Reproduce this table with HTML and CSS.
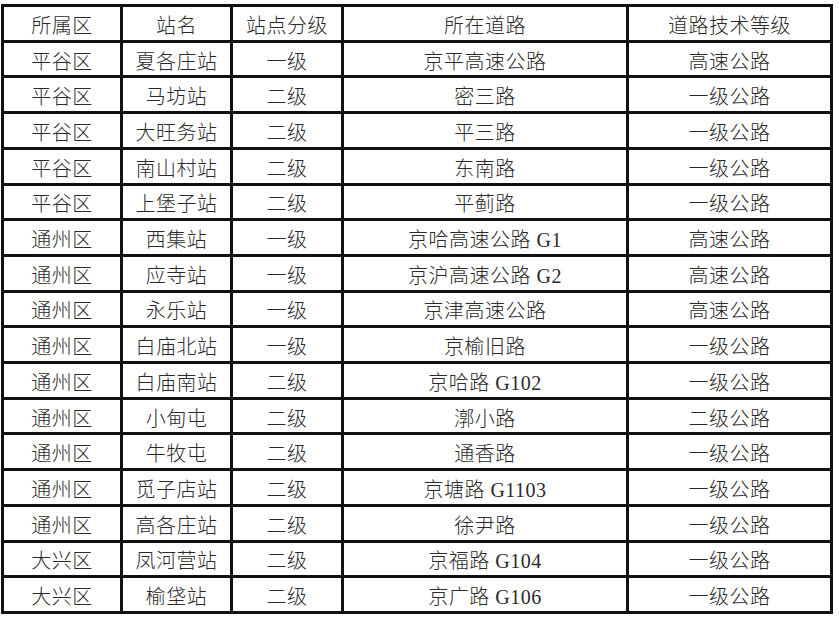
FILE: index.html
```html
<!DOCTYPE html>
<html lang="zh">
<head>
<meta charset="utf-8">
<title>站点表</title>
<link rel="stylesheet" href="styles.css">
</head>
<body>
<div class="table">
  <div class="cell">所属区</div><div class="cell">站名</div><div class="cell">站点分级</div><div class="cell">所在道路</div><div class="cell">道路技术等级</div>
  <div class="cell">平谷区</div><div class="cell">夏各庄站</div><div class="cell">一级</div><div class="cell">京平高速公路</div><div class="cell">高速公路</div>
  <div class="cell">平谷区</div><div class="cell">马坊站</div><div class="cell">二级</div><div class="cell">密三路</div><div class="cell">一级公路</div>
  <div class="cell">平谷区</div><div class="cell">大旺务站</div><div class="cell">二级</div><div class="cell">平三路</div><div class="cell">一级公路</div>
  <div class="cell">平谷区</div><div class="cell">南山村站</div><div class="cell">二级</div><div class="cell">东南路</div><div class="cell">一级公路</div>
  <div class="cell">平谷区</div><div class="cell">上堡子站</div><div class="cell">二级</div><div class="cell">平蓟路</div><div class="cell">一级公路</div>
  <div class="cell">通州区</div><div class="cell">西集站</div><div class="cell">一级</div><div class="cell">京哈高速公路 G1</div><div class="cell">高速公路</div>
  <div class="cell">通州区</div><div class="cell">应寺站</div><div class="cell">一级</div><div class="cell">京沪高速公路 G2</div><div class="cell">高速公路</div>
  <div class="cell">通州区</div><div class="cell">永乐站</div><div class="cell">一级</div><div class="cell">京津高速公路</div><div class="cell">高速公路</div>
  <div class="cell">通州区</div><div class="cell">白庙北站</div><div class="cell">一级</div><div class="cell">京榆旧路</div><div class="cell">一级公路</div>
  <div class="cell">通州区</div><div class="cell">白庙南站</div><div class="cell">二级</div><div class="cell">京哈路 G102</div><div class="cell">一级公路</div>
  <div class="cell">通州区</div><div class="cell">小甸屯</div><div class="cell">二级</div><div class="cell">漷小路</div><div class="cell">二级公路</div>
  <div class="cell">通州区</div><div class="cell">牛牧屯</div><div class="cell">二级</div><div class="cell">通香路</div><div class="cell">一级公路</div>
  <div class="cell">通州区</div><div class="cell">觅子店站</div><div class="cell">二级</div><div class="cell">京塘路 G1103</div><div class="cell">一级公路</div>
  <div class="cell">通州区</div><div class="cell">高各庄站</div><div class="cell">二级</div><div class="cell">徐尹路</div><div class="cell">一级公路</div>
  <div class="cell">大兴区</div><div class="cell">凤河营站</div><div class="cell">二级</div><div class="cell">京福路 G104</div><div class="cell">一级公路</div>
  <div class="cell">大兴区</div><div class="cell">榆垡站</div><div class="cell">二级</div><div class="cell">京广路 G106</div><div class="cell">一级公路</div>
</div>
</body>
</html>
```

FILE: styles.css
```css
html, body {
  margin: 0;
  padding: 0;
  background: #ffffff;
}

body {
  padding: 4px 0 0 1px;
}

.table {
  display: grid;
  width: 832px;
  height: 610px;
  box-sizing: border-box;
  padding: 3px;
  gap: 3px;
  background: #111111;
  grid-template-columns: 116px 107px 108px 282px 201px;
  grid-template-rows: repeat(17, 1fr);
}

.cell {
  background: #ffffff;
  display: flex;
  align-items: center;
  justify-content: center;
  padding-top: 2px;
  box-sizing: border-box;
  font-family: "Liberation Serif", "Noto Sans CJK SC", serif;
  font-weight: 300;
  font-size: 20px;
  letter-spacing: 0.5px;
  color: #2a2a2a;
  white-space: nowrap;
}
```
